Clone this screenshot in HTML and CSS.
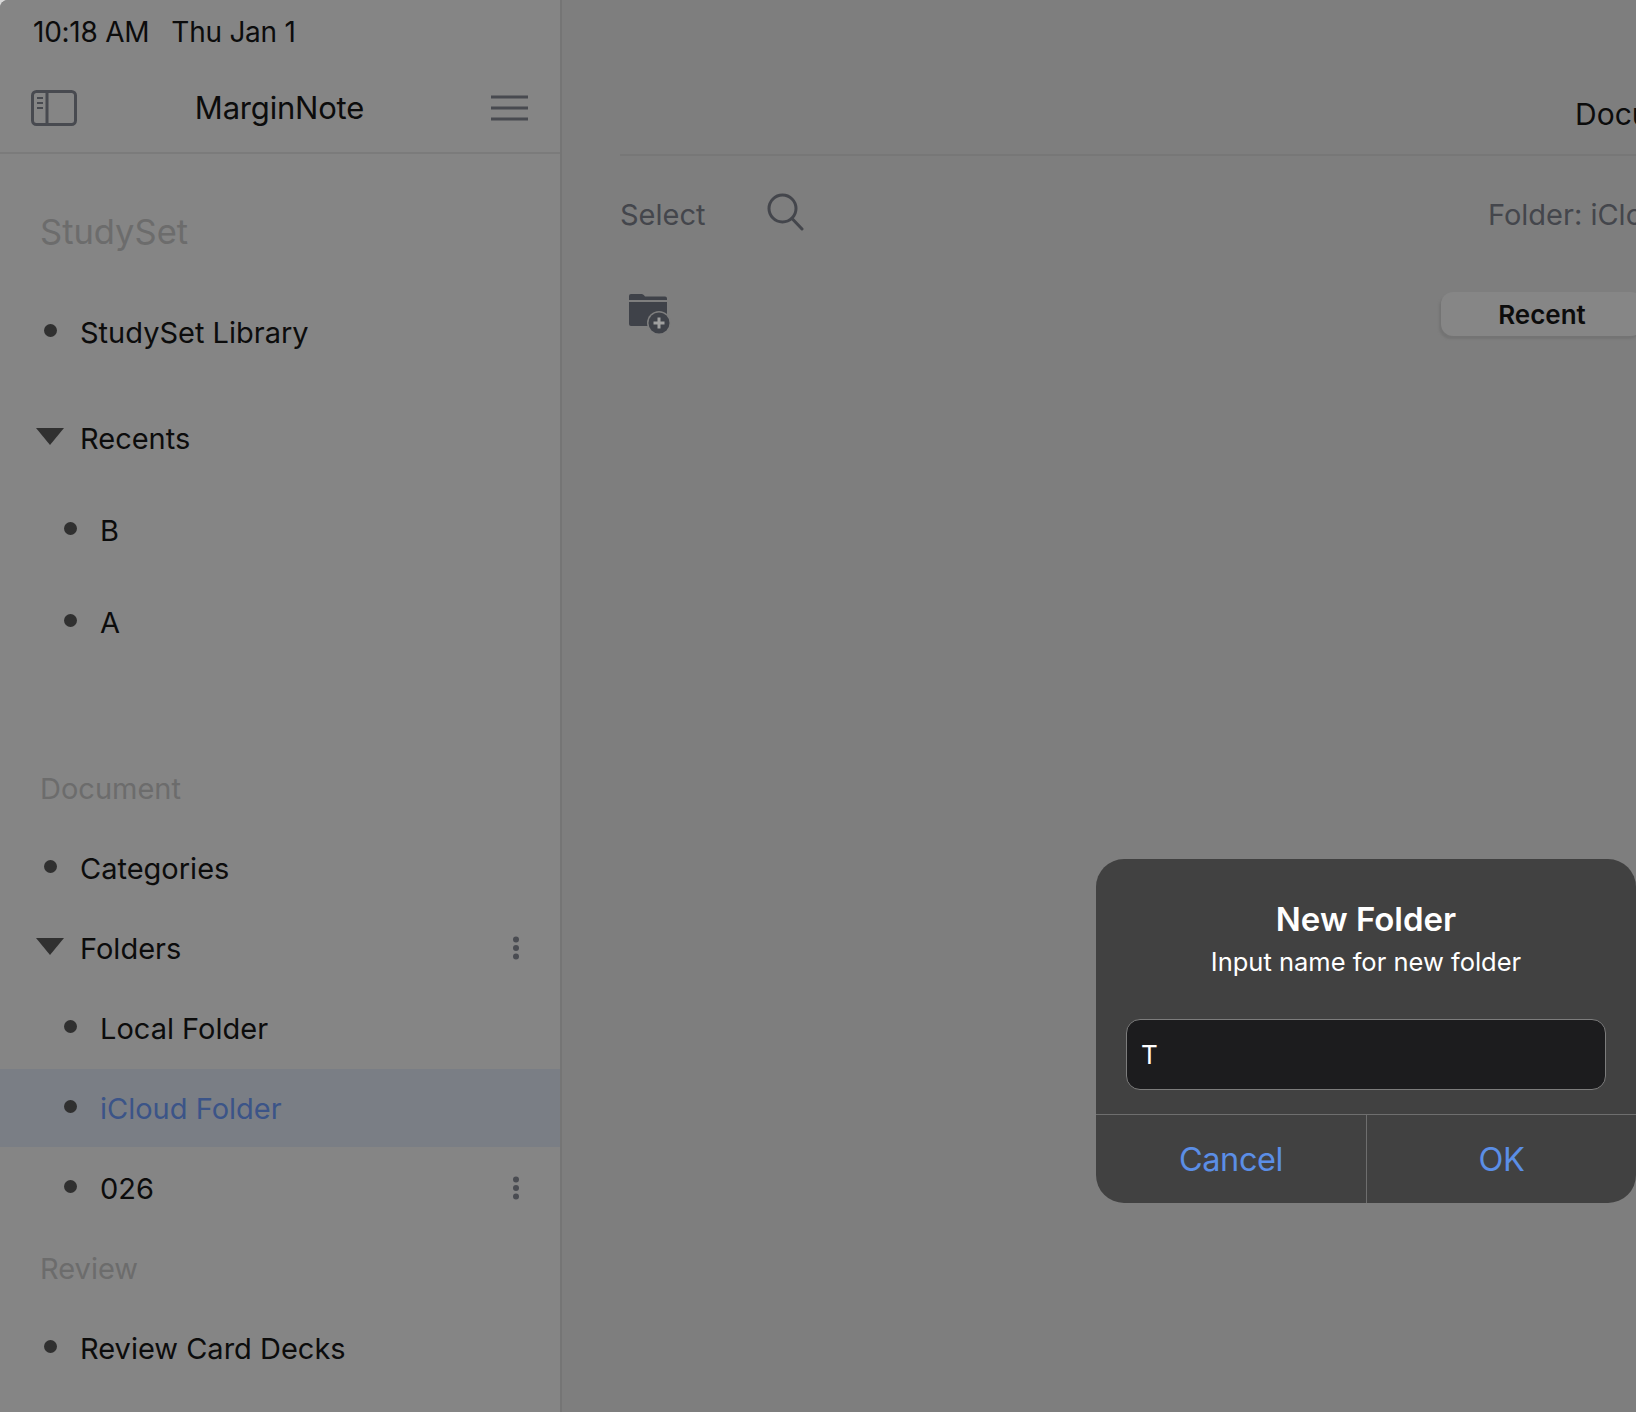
FILE: index.html
```html
<!DOCTYPE html>
<html lang="en">
<head>
<meta charset="utf-8">
<title>MarginNote</title>
<link rel="stylesheet" href="styles.css">
</head>
<body>
<div class="screen">
  <aside class="sidebar">
    <div class="status"><span>10:18 AM</span><span>Thu Jan 1</span></div>
    <header class="side-head">
      <svg class="ico-side" width="46" height="36" viewBox="0 0 46 36" fill="none" stroke="#484a50" stroke-width="3"><rect x="1.500" y="1.500" width="43" height="33" rx="4"/><path d="M16 1.500v33"/><path d="M6 8h6M6 13h6M6 18h6" stroke-width="2"/></svg>
      <div class="side-title">MarginNote</div>
      <svg class="ico-menu" width="37" height="26" viewBox="0 0 37 26" stroke="#484a50" stroke-width="3"><path d="M0 2h37M0 13h37M0 24h37"/></svg>
    </header>
    <div class="h-big">StudySet</div>
    <div class="row r-lib"><i class="dot"></i><span>StudySet Library</span></div>
    <div class="row r-rec"><i class="tri"></i><span>Recents</span></div>
    <div class="row r-92 sub"><i class="dot"></i><span>B</span></div>
    <div class="row r-92 sub"><i class="dot"></i><span>A</span></div>
    <div class="h-small h-doc">Document</div>
    <div class="row r-80 r-cat"><i class="dot"></i><span>Categories</span></div>
    <div class="row r-80"><i class="tri"></i><span>Folders</span><svg class="more" width="8" height="24" viewBox="0 0 8 24" fill="#4a4c52"><circle cx="4" cy="3.500" r="3"/><circle cx="4" cy="12" r="3"/><circle cx="4" cy="20.500" r="3"/></svg></div>
    <div class="row r-80 sub"><i class="dot"></i><span>Local Folder</span></div>
    <div class="row r-80 sub active"><i class="dot"></i><span>iCloud Folder</span></div>
    <div class="row r-80 sub"><i class="dot"></i><span>026</span><svg class="more" width="8" height="24" viewBox="0 0 8 24" fill="#4a4c52"><circle cx="4" cy="3.500" r="3"/><circle cx="4" cy="12" r="3"/><circle cx="4" cy="20.500" r="3"/></svg></div>
    <div class="h-small h-rev">Review</div>
    <div class="row r-80"><i class="dot"></i><span>Review Card Decks</span></div>
  </aside>
  <main class="main">
    <div class="main-head"><span>Document</span></div>
    <div class="toolbar">
      <div class="tools-left">
        <span class="select">Select</span>
        <svg class="ico-search" width="38" height="38" viewBox="0 0 38 38" fill="none" stroke="#44464c" stroke-width="3"><circle cx="16.500" cy="15.500" r="13.500"/><path d="M26 25.500l10 10.500" stroke-linecap="round"/></svg>
      </div>
      <span class="crumb">Folder: iCloud Folder</span>
      <span></span>
    </div>
    <div class="toolbar2">
      <svg class="ico-folder" width="46" height="46" viewBox="0 0 46 46"><path fill="#3f4249" d="M4 3h10.500c1.500 0 2.500 1 3.500 2.500h20a2 2 0 0 1 2 2V9H2V5a2 2 0 0 1 2-2z"/><path fill="#3f4249" d="M2 11h38v22a2 2 0 0 1-2 2H4a2 2 0 0 1-2-2z"/><circle cx="32" cy="32" r="12" fill="#7e7e7e"/><circle cx="32" cy="32" r="10.500" fill="#3f4249"/><path d="M32 26.500v11M26.500 32h11" stroke="#a0a0a0" stroke-width="3"/></svg>
      <div class="segment"><span class="seg-on">Recent</span><span class="seg-off"></span></div>
      <span></span>
    </div>
  </main>
  <div class="dialog">
    <div class="dlg-body">
      <div class="dlg-title">New Folder</div>
      <div class="dlg-msg">Input name for new folder</div>
      <div class="dlg-input">T</div>
    </div>
    <div class="dlg-actions"><span class="dlg-btn">Cancel</span><span class="dlg-btn">OK</span></div>
  </div>
</div>
</body>
</html>
```
FILE: styles.css
```css
html, body { margin: 0; padding: 0; height: 100%; overflow: hidden; background: #d8d8d8; }
.screen {
  position: relative;
  display: flex;
  width: 2732px;
  height: 2048px;
  font-family: Inter, "Noto Sans", sans-serif;
  color: #0c0c0c;
  background: #7e7e7e;
  border-top-left-radius: 8px;
  overflow: hidden;
}
.sidebar {
  flex: 0 0 560px;
  display: flex;
  flex-direction: column;
  background: #858585;
  border-right: 2px solid #757575;
}
.status { display: flex; gap: 22px; height: 64px; padding-left: 33px; font-size: 28px; line-height: 64px; letter-spacing: -0.25px; }
.side-head {
  display: grid; grid-template-columns: 1fr auto 1fr; align-items: center;
  height: 88px; padding: 0 32px 0 31px; border-bottom: 2px solid #7b7b7b;
}
.ico-menu { justify-self: end; }
.side-title { font-size: 31px; letter-spacing: -0.2px; padding-bottom: 2px; }
.h-big { margin-top: 52px; height: 52px; padding-left: 40px; font-size: 34.500px; line-height: 52px; color: #6c6c6c; }
.h-small { height: 40px; padding-left: 40px; font-size: 29px; line-height: 40px; color: #6c6c6c; }
.h-doc { margin-top: 101px; }
.h-rev { margin-top: 21px; margin-bottom: 19px; }
.row { display: flex; align-items: center; position: relative; padding-left: 80px; font-size: 29px; }
.row.sub { padding-left: 100px; }
.r-lib { height: 60px; margin-top: 44px; }
.r-rec { height: 92px; margin-top: 30px; }
.r-92 { height: 92px; }
.r-80 { height: 80px; }
.r-cat { margin-top: 19px; }
.dot { position: absolute; left: 44px; top: calc(50% - 8px); width: 13px; height: 13px; border-radius: 50%; background: #303030; }
.sub .dot { left: 64px; }
.tri { position: absolute; left: 36px; top: calc(50% - 10px); width: 0; height: 0; border-left: 14px solid transparent; border-right: 14px solid transparent; border-top: 17px solid #303030; }
.more { position: absolute; right: 40px; top: calc(50% - 12px); }
.active { height: 78px; margin: 1px 0; background: #7a7e85; color: #3b5488; }
.main { flex: 1; min-width: 0; padding: 0 58px; display: flex; flex-direction: column; }
.main-head { height: 156px; box-sizing: border-box; border-bottom: 2px solid #777; display: flex; justify-content: center; align-items: center; font-size: 30px; padding-top: 74px; padding-left: 2px; }
.toolbar, .toolbar2 { display: grid; grid-template-columns: 1fr auto 1fr; align-items: center; }
.toolbar { height: 117px; color: #44464c; font-size: 29px; }
.tools-left { display: flex; align-items: center; gap: 60px; }
.ico-search { margin-bottom: 5px; }
.crumb { padding-right: 34px; }
.toolbar2 { height: 52px; margin-top: 15px; }
.ico-folder { margin-left: 7px; }
.segment { display: flex; width: 412px; height: 44px; border-radius: 12px; }
.seg-on { flex: 0 0 202px; display: flex; align-items: center; justify-content: center; font-size: 26px; font-weight: 600; border-radius: 12px; background: #868686; box-shadow: -2px 3px 2px #747474; }
.dialog {
  position: absolute; left: 1096px; top: 859px;
  width: 540px; height: 344px;
  display: flex; flex-direction: column;
  border-radius: 28px;
  background: #414141;
  color: #fff;
  overflow: hidden;
}
.dlg-body { flex: 1; padding: 38px 30px 0; text-align: center; }
.dlg-title { font-size: 33px; font-weight: 600; line-height: 44px; }
.dlg-msg { font-size: 25.500px; line-height: 36px; margin-top: 3px; }
.dlg-input { margin-top: 39px; height: 71px; box-sizing: border-box; border: 1px solid #7c7c7c; border-radius: 14px; background: #1c1c1e; padding-left: 14px; line-height: 69px; font-size: 26px; text-align: left; }
.dlg-actions { display: grid; grid-template-columns: 1fr 1fr; height: 88px; border-top: 1px solid #6e6e6e; }
.dlg-btn { display: flex; align-items: center; justify-content: center; font-size: 32.500px; letter-spacing: -0.4px; color: #5b8ee6; }
.dlg-btn + .dlg-btn { border-left: 1px solid #6e6e6e; }
```
